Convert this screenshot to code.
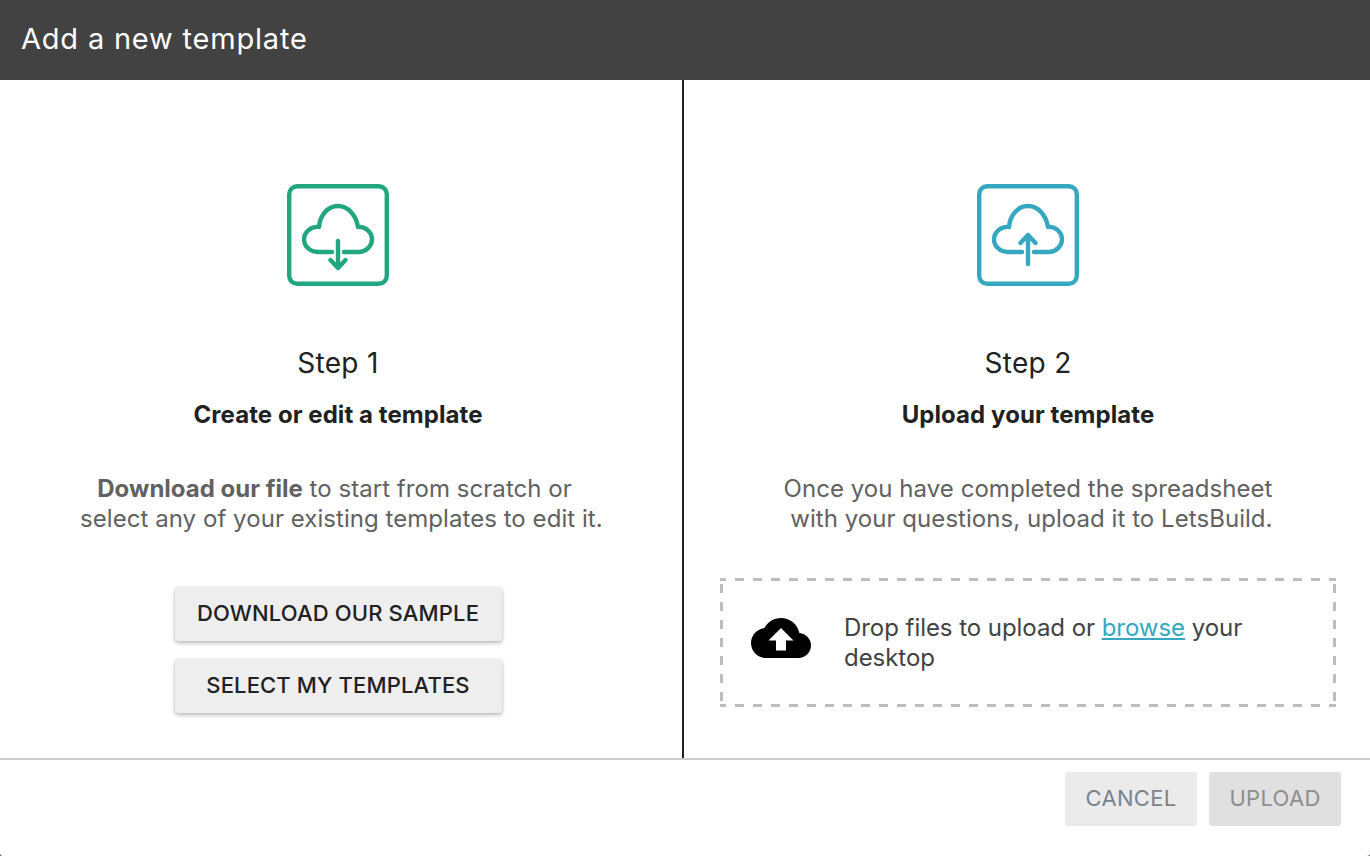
<script>
</script>

<div class="dialog">
  <header class="head"><h1>Add a new template</h1></header>
  <main class="body">
    <section class="col left">
      <svg class="hero" width="102" height="102" viewBox="0 0 102 102" fill="none" stroke="#21a67f" stroke-width="4.4" stroke-linecap="round" stroke-linejoin="round">
        <rect x="2.200" y="2.200" width="97.600" height="97.600" rx="8"/>
        <path d="M45 68H31C23 68 17 62 17 55.500 17 48 24 42 32 43 33 31 41 22 51 22 61 22 69 31 71 43 78 42 85 48 85 55.500 85 62 79 68 72 68H57"/>
        <path d="M51 57V84M43.500 76l7.500 8 7.500-8"/>
      </svg>
      <div class="step">Step 1</div>
      <div class="sub">Create or edit a template</div>
      <p class="desc"><b>Download our file</b> to start from scratch or&nbsp;<br/>&nbsp;select any of your existing templates to edit it.</p>
      <div class="actions">
        <button class="raised">DOWNLOAD OUR SAMPLE</button>
        <button class="raised">SELECT MY TEMPLATES</button>
      </div>
    </section>
    <section class="col right">
      <svg class="hero" width="102" height="102" viewBox="0 0 102 102" fill="none" stroke="#35a8bf" stroke-width="4.4" stroke-linecap="round" stroke-linejoin="round">
        <rect x="2.200" y="2.200" width="97.600" height="97.600" rx="8"/>
        <path d="M45 68H31C23 68 17 62 17 55.500 17 48 24 42 32 43 33 31 41 22 51 22 61 22 69 31 71 43 78 42 85 48 85 55.500 85 62 79 68 72 68H57"/>
        <path d="M51 80V51M43.500 59l7.500-8 7.500 8"/>
      </svg>
      <div class="step">Step 2</div>
      <div class="sub">Upload your template</div>
      <p class="desc">Once you have completed the spreadsheet<br/>&nbsp;with your questions, upload it to LetsBuild.</p>
      <div class="drop">
        <svg class="cloud" width="60" height="60" viewBox="0 0 24 24">
          <path fill="#000" d="M19.350 10.040C18.670 6.590 15.640 4 12 4 9.110 4 6.600 5.640 5.350 8.040 2.340 8.360 0 10.910 0 14c0 3.310 2.690 6 6 6h13c2.760 0 5-2.240 5-5 0-2.640-2.050-4.780-4.650-4.960zM14 13v4h-4v-4H7l5-5 5 5h-3z"/>
        </svg>
        <div class="drop-text">Drop files to upload or <a href="#browse">browse</a> your desktop</div>
      </div>
    </section>
  </main>
  <footer class="foot">
    <button class="flat cancel">CANCEL</button>
    <button class="flat upload">UPLOAD</button>
  </footer>
</div>

<style>
  :global(body) { margin: 0; background: #555; }
  .dialog {
    width: 1370px; height: 856px; display: flex; flex-direction: column;
    font-family: Inter, "Liberation Sans", sans-serif; color: #212121; background: #fff;
    border-radius: 0 0 3px 3px;
  }
  .head { height: 80px; background: #424242; display: flex; align-items: center; padding-left: 21px; flex: none; }
  h1 { margin: 0 0 4px; font-size: 29px; font-weight: 400; color: #fff; letter-spacing: 0.8px; }
  .body { height: 678px; display: flex; flex: none; }
  .col { display: flex; flex-direction: column; align-items: center; padding-top: 104px; box-sizing: border-box; }
  .left { width: 684px; border-right: 2px solid #212121; padding-right: 6px; }
  .right { flex: 1; padding-left: 2px; }
  .hero { display: block; flex: none; }
  .step { margin-top: 59px; font-size: 28px; line-height: 36px; letter-spacing: 0.3px; }
  .sub { margin-top: 19px; font-size: 24px; line-height: 30px; font-weight: 700; letter-spacing: 0.07px; }
  .desc { margin: 44px 0 0; font-size: 24px; line-height: 30px; color: #616161; text-align: center; letter-spacing: 0.05px; }
  .desc b { font-weight: 700; letter-spacing: 0; }
  .actions { margin-top: 53px; display: flex; flex-direction: column; gap: 18px; align-items: flex-end; }
  button { font-family: inherit; border: none; cursor: pointer; }
  .raised {
    width: 327px; height: 54px; padding: 0 0 2px; background: #eeeeee; border-radius: 3px; font-size: 22px; font-weight: 500; color: #212121;
    letter-spacing: 0.15px;
    box-shadow: 0 2px 4px rgba(0,0,0,.28), 0 0 2px rgba(0,0,0,.08);
  }
  .drop {
    margin-top: 44px; width: 616px; height: 129px; flex: none; box-sizing: border-box;
    display: flex; align-items: center; padding: 0 31px;
    background-image:
      linear-gradient(90deg, #bdbdbd 50%, transparent 50%),
      linear-gradient(90deg, #bdbdbd 50%, transparent 50%),
      linear-gradient(0deg, #bdbdbd 50%, transparent 50%),
      linear-gradient(0deg, #bdbdbd 50%, transparent 50%);
    background-size: 18px 3px, 18px 3px, 3px 18px, 3px 18px;
    background-repeat: repeat-x, repeat-x, repeat-y, repeat-y;
    background-position: -3px 0, -3px 100%, 0 -3px, 100% -3px;
  }
  .cloud { flex: none; margin: 0 33px 9px 0; }
  .drop-text { font-size: 24px; line-height: 30px; color: #424242; width: 440px; letter-spacing: -0.05px; }
  .drop-text a { color: #35a8bf; }
  .foot {
    height: 98px; box-sizing: border-box; border-top: 2px solid #cfcfcf; display: flex; justify-content: flex-end;
    gap: 12px; padding: 12px 29px 0 0; flex: none;
  }
  .flat { width: 132px; height: 54px; padding: 0 0 2px; border-radius: 3px; font-size: 22px; font-weight: 400; letter-spacing: 0.3px; }
  .cancel { background: #ebebeb; color: #78838c; }
  .upload { background: #e0e0e0; color: #8e8e8e; }
</style>
